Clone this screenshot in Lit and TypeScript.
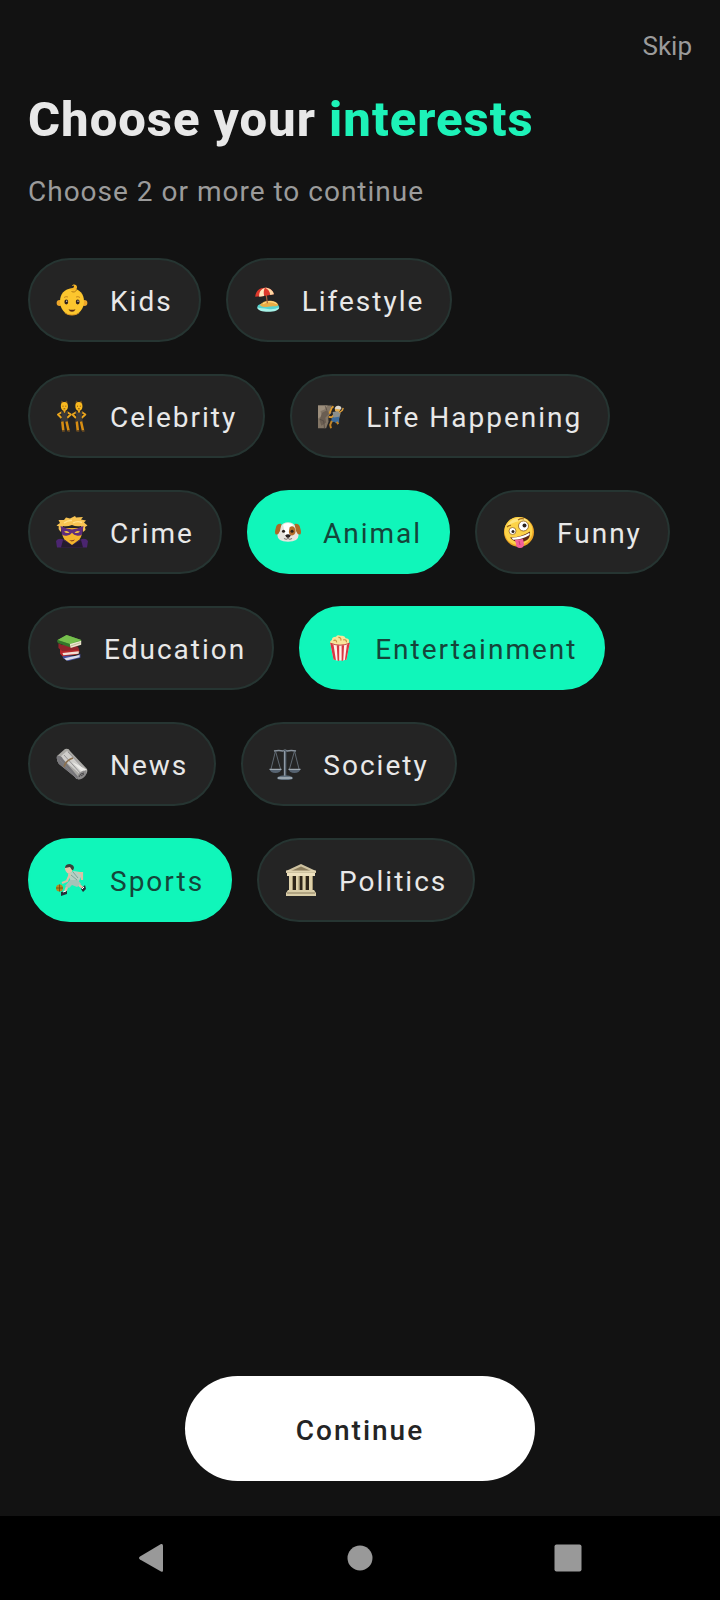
import { LitElement, html, css, svg } from "lit";
import { customElement, state } from "lit/decorators.js";

interface Interest {
  name: string;
  icon: unknown;
  small?: boolean;
}

const kids = svg`
  <circle cx="3.600" cy="19" r="3" fill="#eda62a"/><circle cx="28.400" cy="19" r="3" fill="#eda62a"/>
  <path d="M16 4.500C23.500 4.500 28 10 28 17.500S23 31 16 31 4 25 4 17.500 8.500 4.500 16 4.500Z" fill="#fcc62e"/>
  <path d="M13 5c3-1 5-1 5-2.500 0-1.300-1.500-1-2-.4-.3-2 4.400-2.600 5 .6.300 2-1 3.300-3 4" fill="#f6b426"/>
  <path d="M15.500 7.500c2 1 4 .5 5-1.500" stroke="#a9700f" fill="none" stroke-width=".9"/>
  <ellipse cx="10.300" cy="18" rx="1.900" ry="2.400" fill="#33231b"/><ellipse cx="21.700" cy="18" rx="1.900" ry="2.400" fill="#33231b"/>
  <circle cx="10.700" cy="17.200" r=".6" fill="#fff"/><circle cx="22" cy="17.200" r=".6" fill="#fff"/>
  <path d="M8 13.500q2-1.500 4-.5M20 13q2-1 4 .5" stroke="#c88a1c" fill="none"/>
  <path d="M12.500 25.200q3.500 1.200 7 0-1 2.600-3.500 2.600t-3.500-2.600Z" fill="#5a2a12"/>
  <path d="M8 28.500q8 4 16 0-3 3-8 3t-8-3Z" fill="#e59b20"/>`;

const beach = svg`
  <ellipse cx="17.500" cy="24.500" rx="13.500" ry="5" fill="#56d3cf"/>
  <path d="M4 25c3 2 8 1 13 2s10 0 14-2c0 4-6 5.500-13.500 5.500S4 29 4 25Z" fill="#a7f3e8"/>
  <path d="M7 22c3-3 7-5 12-5s10 2 11 5c-2 2.500-6 1-10 2S10 25 7 22Z" fill="#e9ad45"/>
  <path d="M11 20.500c5-3.500 12-3.500 17 0" stroke="#ffd680" stroke-width="1.500" fill="none"/>
  <path d="M14 3l2.500 17" stroke="#a8613b" stroke-width="1.500"/>
  <path d="M1.500 12C2 5 7 1 13.500 1S23 4 24.500 9c-6 1-16 3-23 3Z" fill="#dd392c"/>
  <path d="M13.500 1C8 3 6 7 6.500 12l6-1C11.500 7 12 3 13.500 1Z" fill="#ffe9bd"/>
  <path d="M13.500 1c4 1.500 6 5 6.500 8.700l4.500-.7C23.500 4 19 1 13.500 1Z" fill="#ffd9a5"/>`;

const dancer = svg`
  <path d="M4.800 4.500 5.500.5l2 1.500h1.500l2-1.500 1 4Z" fill="#6d4b1c"/>
  <path d="M4.800 6Q5 2 8.300 2t3.700 4q0 4.500-3.700 5-3.300-.5-3.500-5Z" fill="#f9b91f"/>
  <path d="M6 12 2 14.500l3.500 3.500M11 12l3.800 2.500-3.800 3.500" stroke="#eaa51d" stroke-width="2" stroke-linejoin="round" fill="none"/>
  <path d="M7.500 10h2v3h-2Z" fill="#eaa51d"/>
  <path d="M5 11.500h2l1.500 1.500 1.500-1.500h2l-1 5.500 1.500 4.500H4.500L6 17Z" fill="#3d3a38"/>
  <path d="M6.300 21.500l1 9M10.500 21.500l2 9" stroke="#d88e13" stroke-width="2.500" fill="none"/>
  <path d="M6 31h2.800M11.500 31h2.500" stroke="#6a4a20" stroke-width="1.500"/>
  <path d="M6.500 6.200h1M9.300 6.200h1M7.500 8.800h1.800" stroke="#7a4710" stroke-width=".9"/>`;
const celebrity = svg`<g>${dancer}</g><g transform="translate(14.500 0)">${dancer}</g>`;

const climber = svg`
  <path d="M0 3h17l-1.500 5 1 4-4 5 .5 6-3 8H0Z" fill="#827565"/>
  <path d="M0 3h12l-4 5-5 2 2 6-5 3Z" fill="#9c8e7c"/>
  <path d="M5 12l6-3 3 4-5 5 1 6-6 4-2-7Z" fill="#6a5e52"/>
  <path d="M2 20l5 2 1 9M9 4l2 5" stroke="#544a42" fill="none"/>
  <path d="M14 13l3-7 2-2M13 17l4 .5 5-5" stroke="#dc9a2f" stroke-width="2.200" fill="none"/>
  <circle cx="24" cy="8" r="3.200" fill="#e3ad4e"/><path d="M20.500 7q1-4 5-3.500t3 4.500Z" fill="#d9d5cc"/>
  <path d="M18 11l6-1 4 2-2 7-7 1Z" fill="#8b8f8c"/>
  <path d="M17 18l9-1v7l-4 1-2-2-4 1Z" fill="#3d6c9b"/>
  <path d="M17 22l-2 5 1 4M23 23l2 3" stroke="#c68524" stroke-width="2.400" fill="none"/>
  <path d="M26 12l4-3 1-3" stroke="#d79a3b" stroke-width="1.800" fill="none"/>`;

const crime = svg`
  <path d="M1 31.500 0 25q2-3 6-2l4 2 6 4 6-4 4-2q4-1 6 2l-1 6.500Z" fill="#4b2570"/>
  <path d="M7 24l9 5 9-5 2 7.500H5Z" fill="#241b2e"/>
  <path d="M6 12h20q.5 8-2.500 11.500L16 29l-7.500-5.500Q5.500 20 6 12Z" fill="#f4b52d"/>
  <path d="M5 16Q1.500 13 3 10.500L.5 9.500 4 7 2.500 4 8 4l2-2.500 4 1L19 0l1 1.500L27 1l-2 2.500 5 1-2 2 3.500 3-2.500 1.500.500 3L27 16q0-4-2-6-5 1-9-1-5 2-9 1-2 2-2 6Z" fill="#f9c452"/>
  <path d="M8 7q4-3 8-2.500M17 7q4-2.500 9-.5" stroke="#ffe08a" stroke-width="1.400" fill="none"/>
  <path d="M4.500 10 11 12.500l5 1 5-1 6.500-2.500L26 18.500q-2 1.500-4.500 1.200-4-.7-5.500-3-1.500 2.300-5.500 3-2.500.3-4.500-1.200Z" fill="#5f2d7d"/>
  <path d="M8 15.500q3-1.500 5.500 1-3 1.500-5.500-1ZM24 15.500q-3-1.500-5.500 1 3 1.500 5.500-1Z" fill="#f6c33d"/>
  <path d="M13 24q3 .8 6-.5-1 2-3.500 2Z" fill="#8d451c"/>`;

const dog = svg`
  <path d="M7 9Q10 4 16 4t9 5q4 5 4 11 0 8-13 8T3 20q0-6 4-11Z" fill="#e8e4df"/>
  <path d="M10 7q6-4 12 0l-3 15h-6Z" fill="#fff"/>
  <path d="M18 10q5-3 7 3 1 6-3 7t-5-4Z" fill="#b36c29"/>
  <path d="M8 6Q2 5 1 11q-2 6 0 8 3 1 5-4ZM24 6q6-1 7 5 2 6 0 8-3 1-5-4Z" fill="#ad6826"/>
  <circle cx="10.500" cy="15" r="1.900" fill="#2c211d"/><circle cx="21" cy="15" r="1.900" fill="#2c211d"/>
  <path d="M12.500 20q3.500-2.500 7 0-1 3.500-3.500 3.500T12.500 20Z" fill="#2b2221"/>
  <path d="M11 24q3 2 5 0 2 2 5 0" stroke="#625650" fill="none"/>`;

const zany = svg`
  <circle cx="16" cy="16" r="15" fill="#eda525"/><circle cx="15.500" cy="15" r="14" fill="#fdd348"/>
  <path d="M4 10Q8 2 17 2q6 0 9 4-10-3-22 4Z" fill="#ffe683"/>
  <circle cx="20.500" cy="10" r="5" fill="#fff" stroke="#8b5915" stroke-width=".8"/><circle cx="21.500" cy="9.500" r="2" fill="#2a211d"/>
  <circle cx="9.500" cy="15" r="3.500" fill="#fff" stroke="#8b5915" stroke-width=".7"/><circle cx="10" cy="15.500" r="1.500" fill="#2a211d"/>
  <path d="M7 21.500q11 0 20-6 1 8-6 10-9 2-14-4Z" fill="#602a14"/>
  <path d="M8.500 21.800q10-.3 18-5v2.200q-8 5-16.500 4.700Z" fill="#fff"/>
  <path d="M12 24l8-1 1 5q0 4-4 4t-4-4Z" fill="#f3609a"/><path d="M16 25l1 4" stroke="#c93a75"/>
  <path d="M4 11q2-2 4-1.500M15 4q3-2 6-1" stroke="#9d6518" fill="none" stroke-width="1.200"/>`;

const books = svg`
  <path d="M7 24l17 2 6-3v5l-15 4-6-3Z" fill="#454f9b"/><path d="M10 28.500l19-4v3l-16 4Z" fill="#d9dbea"/>
  <path d="M5 17l22-2 2 6-3 3-18 2-3-3Z" fill="#b9282b"/><path d="M8 22l20-2v3l-19 2Z" fill="#f3ded4"/>
  <path d="M3 10l4 2 20 2 1 4-20 2-5-4Z" fill="#91242b"/>
  <path d="M2 6 13 0l18 6v2L17 14 2 9Z" fill="#4e9b39"/><path d="M2 6 13 0l18 6-14 5Z" fill="#76bf4d"/>
  <path d="M17 11l14-4v5l-13 4Z" fill="#ece6cd"/><path d="M2 6l15 5v4L3 10Q1 8 2 6Z" fill="#34752b"/>
  <path d="M18 13.500l12-4" stroke="#a59e82" stroke-width=".8"/>`;

const popcorn = svg`
  <path d="M5 12Q2 8 6 6q0-4 5-4 2-3 6-1 5-1 6 3 5 0 4 5l-1 4Z" fill="#f9e49a"/>
  <path d="M8 7q3-2 4 2M14 3q4 0 3 4M20 6q4-1 4 3" stroke="#c79443" fill="none" stroke-width="1.400"/>
  <path d="M4 10q12 5 24 0l-4 20q-8 3-16 0Z" fill="#fff0e8"/>
  <path d="M4 10l4 2 3 19-3-1ZM12 12.500h3V32l-2-.5ZM18 12.500h3L20 31.500l-2 .5ZM28 10l-3.500 2L22 31l2-1Z" fill="#d93643"/>
  <path d="M4 10q12 5 24 0" stroke="#b7282e" fill="none"/>`;

const news = svg`
  <path d="M1 8 9 1q4-1 5 2l17 18q1 3-1 5l-6 5q-4 1-5-2L3 16Q0 12 1 8Z" fill="#aaa9a5"/>
  <path d="M4 9l7-6 19 19-5 5Z" fill="#cfcecb"/>
  <path d="M1 8q4-1 6 3l17 20q-4 1-5-2L3 16Q0 12 1 8Z" fill="#77767a"/>
  <path d="M4 12l17 19M8 7l18 20M12 4l18 19" stroke="#858486" stroke-width=".8"/>
  <path d="M16 14l8 4 7 4-6 1Z" fill="#ecebe8"/>
  <path d="M8 19q1-6 9-9" stroke="#8c714f" stroke-width="1.700" fill="none"/>
  <ellipse cx="26" cy="27" rx="5.500" ry="3" transform="rotate(-42 26 27)" fill="#8b8a8a"/>
  <path d="M23 29q1-4 5-4M25 28l3-2" stroke="#4c4b4d" fill="none"/>`;

const scales = svg`
  <path d="M5 3q5-1 9 0 2-1.500 4 0 4-1 9 0" stroke="#89939d" stroke-width="1.500" fill="none"/>
  <path d="M16 2v27" stroke="#56626e" stroke-width="2.600"/><path d="M15.600 3v25" stroke="#a7b1ba" stroke-width=".8"/>
  <path d="M6.500 3 2 21M6.500 3l5 18M25.500 3l-5 18M25.500 3 30 21" stroke="#67717b" stroke-width=".9"/>
  <path d="M.5 21h12q-1 4-6 4t-6-4ZM19.500 21h12q-1 4-6 4t-6-4Z" fill="#566371"/>
  <path d="M.5 21.300h12M19.500 21.300h12" stroke="#b2bbc2"/>
  <path d="M8 30q1-2 6-2.500h4q5 .5 6 2.500 0 2-8 2t-8-2Z" fill="#61707e"/><path d="M9 30h14" stroke="#d2d9dd"/>`;

const sports = svg`
  <path d="M9 4q0-3 4-3t4 3l-1 4-3 2q-4-2-4-6Z" fill="#e5c4aa"/><path d="M9 4q0-4 5-4 4 1 4 4-1 3-2 2l-2-3Z" fill="#37413b"/>
  <path d="M12 10l6-3 6 1 2 3-4 8-7-1Z" fill="#b5d0c4"/>
  <path d="M14 10l-3 7-5 2M22 9l4 0 0 7" stroke="#dcc0a5" stroke-width="2.200" fill="none"/>
  <path d="M14 16l8 0 3 4-4 3-5-2-3 3-4-2Z" fill="#a5c3b8"/><path d="M15 11l6 5M17 8l5 6" stroke="#7fa499"/>
  <path d="M11 23l-2 5M23 21l4 3" stroke="#dcc0a5" stroke-width="2.400"/>
  <path d="M5 28l6-1v3l-6 2ZM25 25l4-4 1 4-3 3Z" fill="#263039"/><path d="M7 28l3-1M26 25l2-2" stroke="#fff"/>
  <circle cx="3.500" cy="24" r="3.500" fill="#b58a1d"/><path d="M0 24h7M3.500 20.500v7" stroke="#685014" stroke-width=".8"/>`;

const temple = svg`
  <path d="M4 10h24v18H4Z" fill="#2e2519"/>
  <path d="M16 0 31 7v2H1V7Z" fill="#cfc3a1"/><path d="M16 2.500 26 7H6Z" fill="#8b7c5b"/>
  <path d="M2 9h28v3H2Z" fill="#eee1bf"/>
  <path d="M4 12h4v15H4ZM11 12h3.500v15H11ZM17.500 12H21v15h-3.500ZM24 12h4v15h-4Z" fill="#ded1aa"/>
  <path d="M7.500 12v15M14 12v15M20.500 12v15M27.500 12v15" stroke="#a19370"/>
  <path d="M3 26h26l2 3v3H1v-3Z" fill="#d9cda8"/><path d="M2 29h28" stroke="#887b5c"/><path d="M1 7h30" stroke="#fff2cf" stroke-width=".7"/>`;

const rows: Interest[][] = [
  [{ name: "Kids", icon: kids }, { name: "Lifestyle", icon: beach, small: true }],
  [{ name: "Celebrity", icon: celebrity }, { name: "Life Happening", icon: climber, small: true }],
  [{ name: "Crime", icon: crime }, { name: "Animal", icon: dog, small: true }, { name: "Funny", icon: zany }],
  [{ name: "Education", icon: books, small: true }, { name: "Entertainment", icon: popcorn, small: true }],
  [{ name: "News", icon: news }, { name: "Society", icon: scales }],
  [{ name: "Sports", icon: sports }, { name: "Politics", icon: temple }],
];

@customElement("app-root")
export class AppRoot extends LitElement {
  @state() private selected = new Set(["Animal", "Entertainment", "Sports"]);

  static styles = css`
    :host { display: flex; flex-direction: column; min-height: 100vh; background: #121212; color: #e8e8e8; font-family: Roboto, sans-serif; }
    * { box-sizing: border-box; }
    button { font: inherit; color: inherit; border: 0; padding: 0; background: none; cursor: pointer; }
    svg { display: block; }
    .top { display: flex; justify-content: flex-end; padding: 28px 28px 0; }
    .skip { font-size: 26px; line-height: 36px; color: #9b9b9b; }
    main { flex: 1; padding: 24px 28px; }
    h1 { margin: 0; font-size: 49px; line-height: 64px; font-weight: 800; letter-spacing: 1px; }
    .accent { color: #1df2b8; }
    .hint { margin: 20px 0 0; font-size: 28px; line-height: 40px; letter-spacing: 1px; color: #9b9b9b; }
    .rows { display: flex; flex-direction: column; gap: 32px; margin-top: 46px; }
    .row { display: flex; flex-wrap: wrap; gap: 25px; }
    .chip { display: flex; align-items: center; gap: 22px; height: 84px; padding: 0 26px; border: 2px solid #263532; border-radius: 42px; background: #242424; font-size: 28px; line-height: 36px; letter-spacing: 2px; }
    .chip.on { background: #10f6ba; border-color: #10f6ba; color: #15453a; }
    .label { padding-top: 4px; }
    .icon { width: 32px; height: 32px; }
    .icon.small { width: 26px; height: 26px; }
    footer { display: flex; justify-content: center; padding: 0 28px 35px; }
    .continue { width: 350px; height: 105px; padding-top: 4px; border-radius: 53px; background: #fff; color: #242424; font-size: 28px; font-weight: 500; letter-spacing: 2px; }
    nav { display: flex; justify-content: space-around; align-items: center; height: 84px; padding: 0 48px; background: #000; }
    .key { width: 32px; height: 32px; fill: #999; }
  `;

  private toggle(name: string) {
    const next = new Set(this.selected);
    if (!next.delete(name)) next.add(name);
    this.selected = next;
  }

  private chip({ name, icon, small }: Interest) {
    const on = this.selected.has(name);
    return html`<button class="chip ${on ? "on" : ""}" aria-pressed=${on ? "true" : "false"} @click=${() => this.toggle(name)}>
      <svg class="icon ${small ? "small" : ""}" viewBox="0 0 32 32" aria-hidden="true">${icon}</svg><span class="label">${name}</span>
    </button>`;
  }

  render() {
    return html`
      <header class="top"><button class="skip">Skip</button></header>
      <main>
        <h1>Choose your <span class="accent">interests</span></h1>
        <p class="hint">Choose 2 or more to continue</p>
        <div class="rows">${rows.map((row) => html`<div class="row">${row.map((item) => this.chip(item))}</div>`)}</div>
      </main>
      <footer><button class="continue" ?disabled=${this.selected.size < 2}>Continue</button></footer>
      <nav aria-label="System">
        <button aria-label="Back"><svg class="key" viewBox="0 0 32 32"><path d="M27 3.500v25q0 2-2 1L4 17.500q-2-1.500 0-3L25 2q2-.5 2 1.500Z"/></svg></button>
        <button aria-label="Home"><svg class="key" viewBox="0 0 32 32"><circle cx="16" cy="16" r="12.500"/></svg></button>
        <button aria-label="Overview"><svg class="key" viewBox="0 0 32 32"><rect x="2.500" y="2.500" width="27" height="27" rx="2"/></svg></button>
      </nav>`;
  }
}
